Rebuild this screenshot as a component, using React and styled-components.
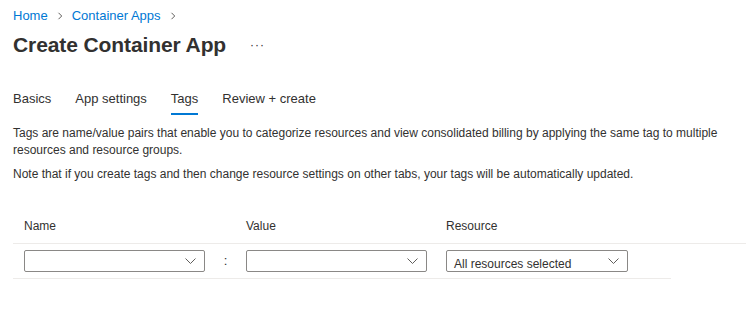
import React from 'react';
import styled, { createGlobalStyle } from 'styled-components';

const TABS = ['Basics', 'App settings', 'Tags', 'Review + create'];
const SELECTED_TAB = 'Tags';

const GlobalStyle = createGlobalStyle`
  html, body {
    margin: 0;
    padding: 0;
    background: #fff;
  }
  body {
    font-family: "Liberation Sans", Arial, sans-serif;
    color: #323130;
  }
`;

const StyledPage = styled.div`
  padding: 8px 0 0 13px;
  display: flex;
  flex-direction: column;
`;

const StyledBreadcrumb = styled.nav`
  display: flex;
  align-items: center;
  gap: 8px;
  font-size: 13px;
  line-height: 16px;
  height: 16px;
`;

const StyledCrumb = styled.a`
  color: #0078d4;
  text-decoration: none;
`;

const StyledChevron = styled.svg`
  width: 8px;
  height: 8px;
  flex: none;
`;

const StyledTitleRow = styled.div`
  display: flex;
  align-items: center;
  height: 26px;
  margin-top: 8px;
`;

const StyledTitle = styled.h1`
  margin: 0;
  font-size: 21px;
  font-weight: 700;
  line-height: 26px;
  letter-spacing: -0.1px;
`;

const StyledMore = styled.span`
  margin-left: 24px;
  font-size: 12px;
  letter-spacing: 1px;
  line-height: 1;
`;

const StyledTabs = styled.ul`
  list-style-type: none;
  margin: 27px 0 0;
  padding: 0;
  display: flex;
  gap: 24px;
`;

const StyledTab = styled.li`
  font-size: 13px;
  line-height: 16px;
  padding: 6px 0;
  border-bottom: 2px solid ${props => (props.selected ? '#0078d4' : 'transparent')};
  cursor: pointer;
`;

const StyledText = styled.p`
  margin: ${props => props.gap}px 0 0;
  font-size: 12px;
  line-height: 17px;
  max-width: 720px;
`;

const StyledTable = styled.div`
  margin-top: 35px;
  display: flex;
  flex-direction: column;
`;

const StyledTableRow = styled.div`
  display: grid;
  grid-template-columns: 181px 41px 181px 19px 182px;
  align-items: center;
  padding: ${props => (props.header ? '0 0 9px 11px' : '6px 0 6px 11px')};
  border-bottom: 1px solid #edebe9;
  width: ${props => (props.header ? 'auto' : '647px')};
  font-size: 12px;
  line-height: 16px;
`;

const StyledHeaderCell = styled.div`
  grid-column: ${props => props.col};
`;

const StyledColon = styled.div`
  text-align: center;
  font-size: 13px;
`;

const StyledDropdown = styled.div`
  box-sizing: border-box;
  height: 22px;
  border: 1px solid #8a8886;
  border-radius: 2px;
  display: flex;
  align-items: center;
  justify-content: space-between;
  padding: 0 8px 0 7px;
  font-size: 12px;
  grid-column: ${props => props.col};
`;

const StyledValue = styled.span`
  padding-top: 5px;
`;

const StyledCaret = styled.svg`
  width: 11px;
  height: 6px;
  flex: none;
`;

const Chevron = () => (
  <StyledChevron viewBox="0 0 8 8">
    <path d="M2.5 0.8 L5.7 4 L2.5 7.2" fill="none" stroke="#605e5c" strokeWidth="1" />
  </StyledChevron>
);

const Dropdown = ({ col, value }) => (
  <StyledDropdown col={col}>
    <StyledValue>{value}</StyledValue>
    <StyledCaret viewBox="0 0 11 6">
      <path d="M0.5 0.5 L5.5 5.5 L10.5 0.5" fill="none" stroke="#605e5c" strokeWidth="1" />
    </StyledCaret>
  </StyledDropdown>
);

export default function App() {
  return (
    <StyledPage>
      <GlobalStyle />
      <StyledBreadcrumb>
        <StyledCrumb>Home</StyledCrumb>
        <Chevron />
        <StyledCrumb>Container Apps</StyledCrumb>
        <Chevron />
      </StyledBreadcrumb>

      <StyledTitleRow>
        <StyledTitle>Create Container App</StyledTitle>
        <StyledMore>···</StyledMore>
      </StyledTitleRow>

      <StyledTabs>
        {TABS.map(item => (
          <StyledTab key={item} selected={item === SELECTED_TAB}>
            {item}
          </StyledTab>
        ))}
      </StyledTabs>

      <StyledText gap={10}>
        Tags are name/value pairs that enable you to categorize resources and view consolidated billing by applying
        the same tag to multiple resources and resource groups.
      </StyledText>
      <StyledText gap={7}>
        Note that if you create tags and then change resource settings on other tabs, your tags will be automatically
        updated.
      </StyledText>

      <StyledTable>
        <StyledTableRow header>
          <StyledHeaderCell col={1}>Name</StyledHeaderCell>
          <StyledHeaderCell col={3}>Value</StyledHeaderCell>
          <StyledHeaderCell col={5}>Resource</StyledHeaderCell>
        </StyledTableRow>
        <StyledTableRow>
          <Dropdown col={1} value="" />
          <StyledColon>:</StyledColon>
          <Dropdown col={3} value="" />
          <Dropdown col={5} value="All resources selected" />
        </StyledTableRow>
      </StyledTable>
    </StyledPage>
  );
}
